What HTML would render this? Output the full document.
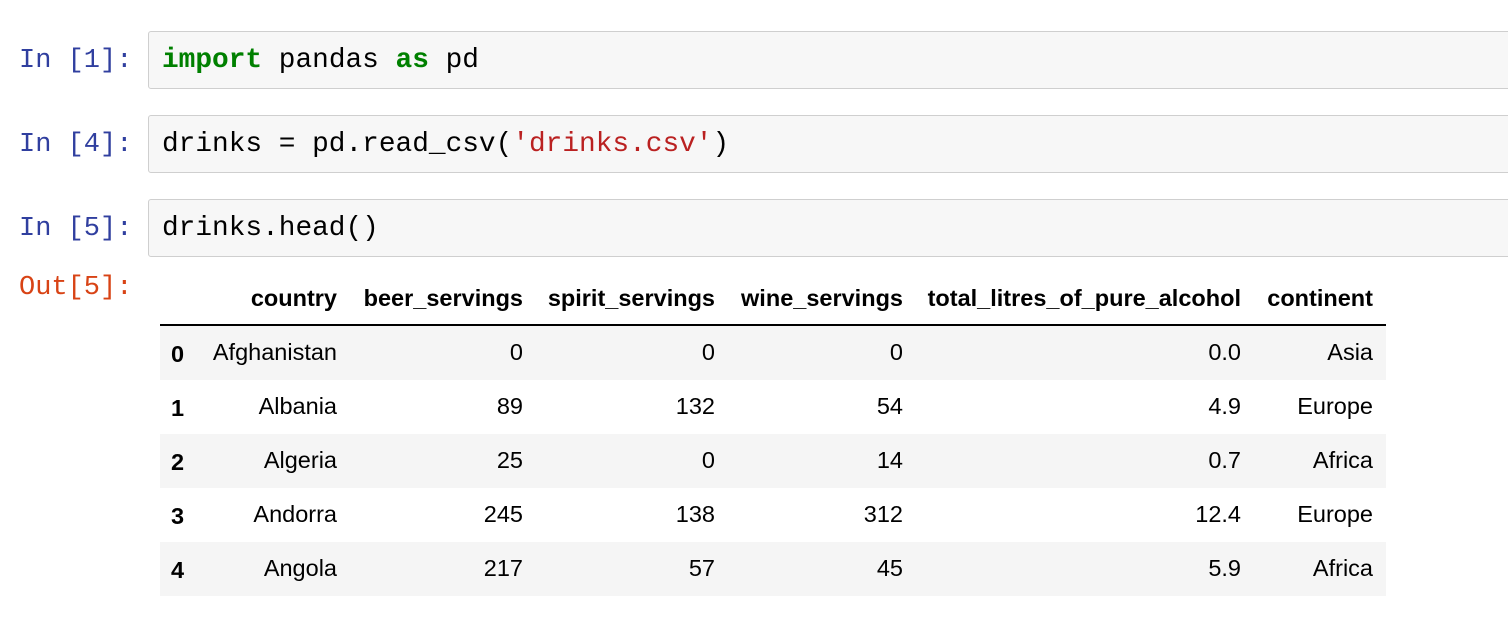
<!DOCTYPE html>
<html><head><meta charset="utf-8"><style>
body{margin:0;width:1508px;height:620px;background:#fff;position:relative;overflow:hidden}
.p{position:absolute;font-family:"Liberation Mono",monospace;font-size:27px;line-height:30px;color:#303f9f;left:19px}
.o{color:#d84315}
.box{position:absolute;left:148px;width:1380px;height:56px;background:#f7f7f7;border:1px solid #cfcfcf;border-radius:3px}
.c{position:absolute;left:162px;font-family:"Liberation Mono",monospace;font-size:27.8px;line-height:30px;color:#000;white-space:pre}
.k{color:#008000;font-weight:bold}.s{color:#ba2121}
.r{position:absolute;left:160px;width:1226px;height:54px}
.t{position:absolute;font-family:"Liberation Sans",Arial,sans-serif;font-size:23.5px;line-height:30px;color:#000;text-align:right;white-space:nowrap}
.b{font-weight:bold}
</style></head><body>
<div class="p" style="top:46px">In [1]:</div>
<div class="box" style="top:31px"></div>
<div class="c" style="top:46px"><span class="k">import</span> pandas <span class="k">as</span> pd</div>
<div class="p" style="top:130px">In [4]:</div>
<div class="box" style="top:115px"></div>
<div class="c" style="top:130px">drinks = pd.read_csv(<span class="s">'drinks.csv'</span>)</div>
<div class="p" style="top:214px">In [5]:</div>
<div class="box" style="top:199px"></div>
<div class="c" style="top:214px">drinks.head()</div>
<div class="p o" style="top:273px">Out[5]:</div>

<div style="position:absolute;left:160px;top:324px;width:1226px;height:2px;background:#000"></div>
<div class="r" style="top:326px;background:#f5f5f5"></div>
<div class="r" style="top:434px;background:#f5f5f5"></div>
<div class="r" style="top:542px;background:#f5f5f5"></div>

<div id="tbl"></div>
<script>
var cols=[337,523,715,903,1241,1373];
var head=["country","beer_servings","spirit_servings","wine_servings","total_litres_of_pure_alcohol","continent"];
var rows=[["Afghanistan","0","0","0","0.0","Asia"],["Albania","89","132","54","4.9","Europe"],["Algeria","25","0","14","0.7","Africa"],["Andorra","245","138","312","12.4","Europe"],["Angola","217","57","45","5.9","Africa"]];
var h="";
head.forEach(function(t,i){h+='<div class="t b" style="top:283px;right:'+(1508-cols[i])+'px">'+t+'</div>';});
rows.forEach(function(r,j){var y=337+54*j;
h+='<div class="t b" style="top:'+(y+2)+'px;left:171px;text-align:left">'+j+'</div>';
r.forEach(function(t,i){h+='<div class="t" style="top:'+y+'px;right:'+(1508-cols[i])+'px">'+t+'</div>';});});
document.getElementById("tbl").innerHTML=h;
</script>
</body></html>
